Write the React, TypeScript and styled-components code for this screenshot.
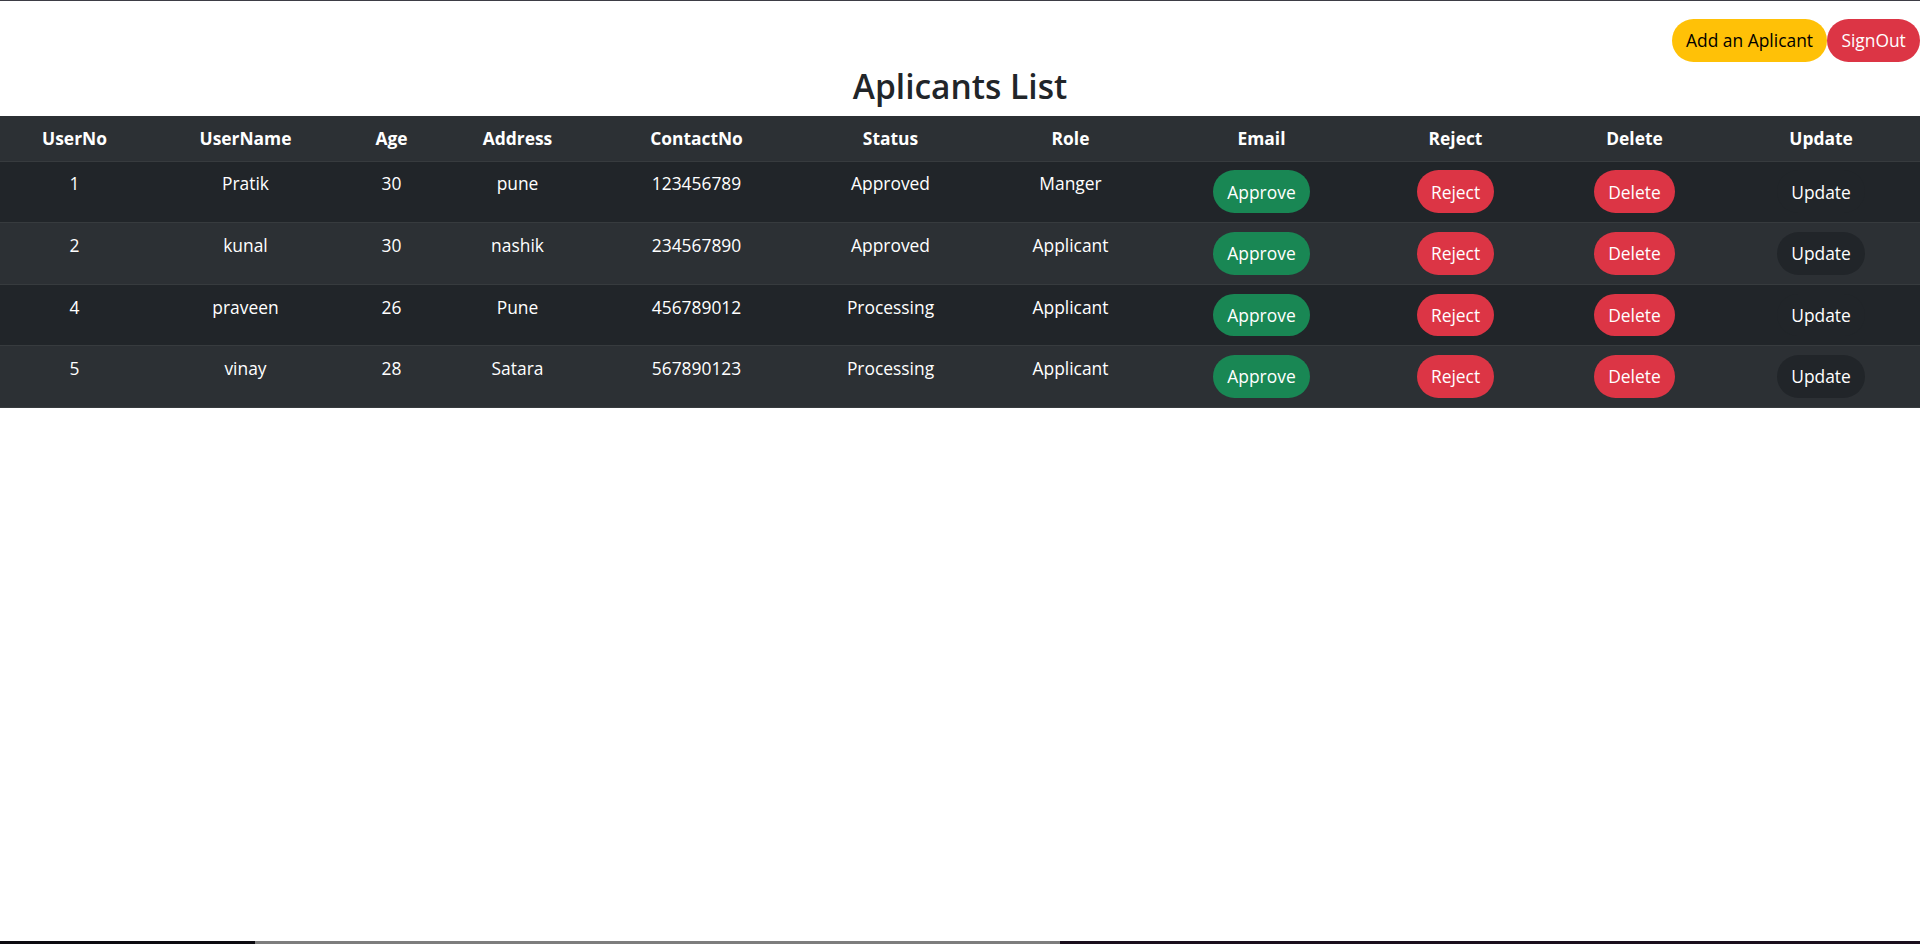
import { FC } from "react"
import styled, { createGlobalStyle } from "styled-components"

const GlobalStyle = createGlobalStyle`
  body {
    margin: 0;
    background: #fff;
    font-family: "Open Sans", "Noto Sans", sans-serif;
    color: #212529;
  }
  * {
    box-sizing: border-box;
  }
`

const TopLine = styled.div`
  height: 1px;
  background: #3d3d45;
`
const Toolbar = styled.div`
  display: flex;
  justify-content: flex-end;
  padding-top: 18px;
`
const Pill = styled.button<{ $variant: "warning" | "danger" | "success" | "dark" }>`
  font-family: inherit;
  font-size: 17.4px;
  line-height: 26.4px;
  padding: 7.2px 13.2px;
  border: 1.1px solid transparent;
  border-radius: 50rem;
  cursor: pointer;
  background: ${(p) =>
    p.$variant === "warning"
      ? "#ffc107"
      : p.$variant === "danger"
      ? "#dc3545"
      : p.$variant === "success"
      ? "#198754"
      : "#212529"};
  color: ${(p) => (p.$variant === "warning" ? "#000" : "#fff")};
`
const Title = styled.h2`
  margin: 3px 0 9px;
  text-align: center;
  font-size: 33.5px;
  font-weight: 600;
  line-height: 42px;
`
const Table = styled.table`
  width: 100%;
  border-collapse: collapse;
  table-layout: fixed;
  color: #fff;
  font-size: 17.4px;
`
const HeadCell = styled.th`
  background: #2c3034;
  padding: 9.2px 8.8px;
  line-height: 26.4px;
  font-weight: 700;
  text-align: center;
  border-bottom: 1px solid #373b3e;
`
const Row = styled.tr<{ $alt: boolean }>`
  background: ${(p) => (p.$alt ? "#2c3034" : "#212529")};
  border-bottom: 1px solid #373b3e;
`
const Cell = styled.td`
  padding: 8.9px 8.8px;
  line-height: 26.4px;
  text-align: center;
  vertical-align: top;
`
const BottomStrip = styled.div`
  position: fixed;
  left: 0;
  right: 0;
  bottom: 0;
  height: 3px;
  display: flex;
`
const StripPart = styled.div<{ $color: string; $w: string }>`
  background: ${(p) => p.$color};
  width: ${(p) => p.$w};
`

const widths = [149, 193, 99, 153, 205, 183, 177, 205, 183, 175, 198]
const headers = [
  "UserNo",
  "UserName",
  "Age",
  "Address",
  "ContactNo",
  "Status",
  "Role",
  "Email",
  "Reject",
  "Delete",
  "Update",
]

interface Applicant {
  id: number
  name: string
  age: number
  address: string
  contact: string
  status: string
  role: string
}

const applicants: Applicant[] = [
  { id: 1, name: "Pratik", age: 30, address: "pune", contact: "123456789", status: "Approved", role: "Manger" },
  { id: 2, name: "kunal", age: 30, address: "nashik", contact: "234567890", status: "Approved", role: "Applicant" },
  { id: 4, name: "praveen", age: 26, address: "Pune", contact: "456789012", status: "Processing", role: "Applicant" },
  { id: 5, name: "vinay", age: 28, address: "Satara", contact: "567890123", status: "Processing", role: "Applicant" },
]

const App: FC = () => {
  return (
    <>
      <GlobalStyle />
      <TopLine />
      <Toolbar>
        <Pill $variant="warning">Add an Aplicant</Pill>
        <Pill $variant="danger">SignOut</Pill>
      </Toolbar>
      <Title>Aplicants List</Title>
      <Table>
        <colgroup>
          {widths.map((w, i) => (
            <col key={i} style={{ width: w }} />
          ))}
        </colgroup>
        <thead>
          <tr>
            {headers.map((h) => (
              <HeadCell key={h}>{h}</HeadCell>
            ))}
          </tr>
        </thead>
        <tbody>
          {applicants.map((a, i) => (
            <Row key={a.id} $alt={i % 2 === 1}>
              <Cell>{a.id}</Cell>
              <Cell>{a.name}</Cell>
              <Cell>{a.age}</Cell>
              <Cell>{a.address}</Cell>
              <Cell>{a.contact}</Cell>
              <Cell>{a.status}</Cell>
              <Cell>{a.role}</Cell>
              <Cell>
                <Pill $variant="success">Approve</Pill>
              </Cell>
              <Cell>
                <Pill $variant="danger">Reject</Pill>
              </Cell>
              <Cell>
                <Pill $variant="danger">Delete</Pill>
              </Cell>
              <Cell>
                <Pill $variant="dark">Update</Pill>
              </Cell>
            </Row>
          ))}
        </tbody>
      </Table>
      <BottomStrip>
        <StripPart $color="#0c0a10" $w="255px" />
        <StripPart $color="#7d7d7d" $w="805px" />
        <StripPart $color="#1a0f1c" $w="860px" />
      </BottomStrip>
    </>
  )
}

export default App
